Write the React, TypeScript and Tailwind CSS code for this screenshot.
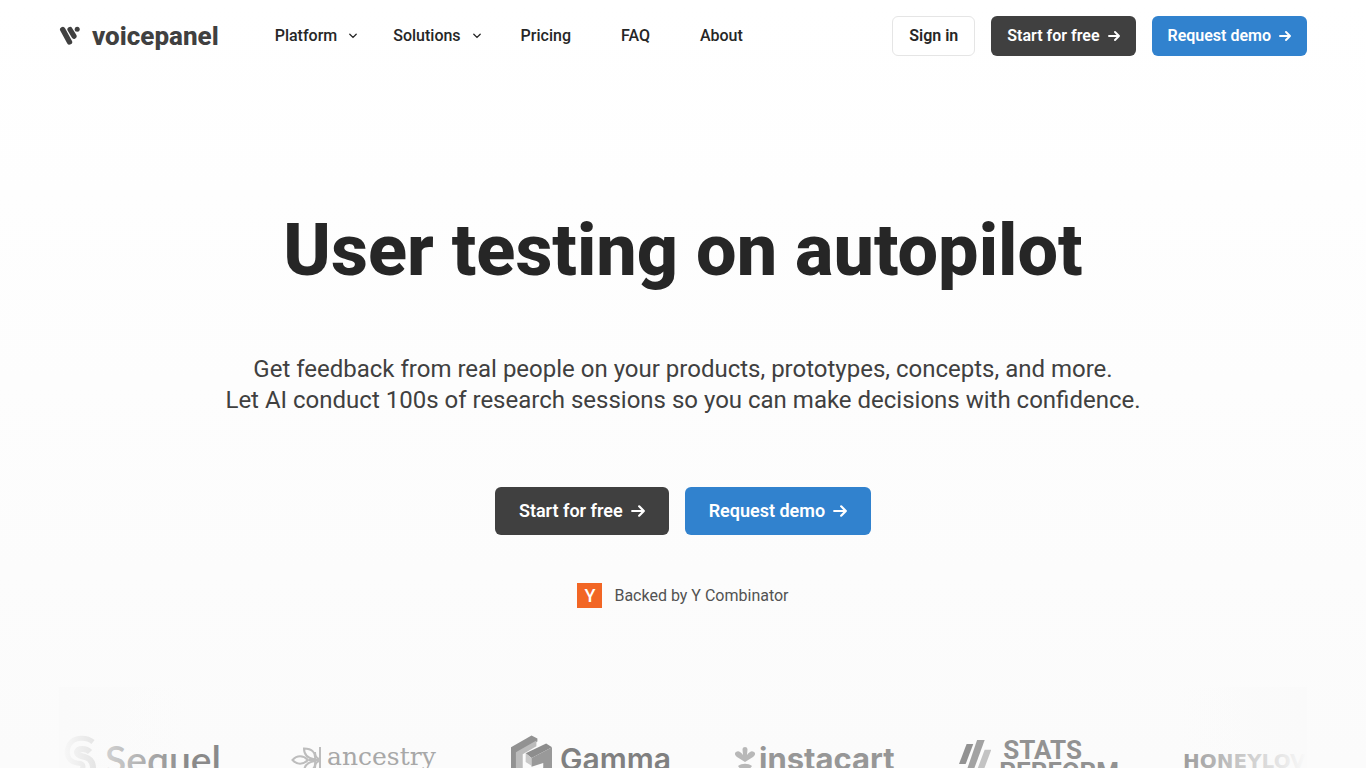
import { clsx } from 'clsx';
import type { ReactNode } from 'react';

const NAV_LINKS = ['Pricing', 'FAQ', 'About'];

function LogoMark() {
  return (
    <svg width="21" height="20" viewBox="0 0 21 20" fill="none" stroke="currentColor" strokeLinecap="round">
      <path d="M3.700 3.500l6.800 12.500" strokeWidth="5.400" />
      <path d="M11 3.500l4 6.700" strokeWidth="5.200" />
      <circle cx="18.200" cy="3.300" r="2.500" fill="currentColor" stroke="none" />
    </svg>
  );
}

function Chevron() {
  return (
    <svg width="8" height="6" viewBox="0 0 8 6" fill="none" stroke="currentColor" strokeWidth="1.300" strokeLinecap="round">
      <path d="M.8 1.200L4 4.400l3.200-3.200" />
    </svg>
  );
}

function Arrow({ large }: { large?: boolean }) {
  return (
    <svg
      className={large ? 'size-[14px]' : 'size-3'}
      viewBox="0 0 12 12"
      fill="none"
      stroke="currentColor"
      strokeWidth="1.900"
      strokeLinecap="round"
      strokeLinejoin="round"
    >
      <path d="M1 6h9.700M7 2l4 4-4 4" />
    </svg>
  );
}

interface ActionProps {
  children: ReactNode;
  primary?: boolean;
  large?: boolean;
}

function Action({ children, primary, large }: ActionProps) {
  return (
    <a
      href="#"
      className={clsx(
        'flex items-center gap-2 rounded-md font-semibold text-white',
        large ? 'h-12 px-6 text-lg' : 'h-10 px-4 text-base',
        primary ? 'bg-[#3182ce]' : 'bg-[#404040]',
      )}
    >
      {children}
      <Arrow large={large} />
    </a>
  );
}

function Header() {
  return (
    <header className="mx-auto flex h-[72px] w-full max-w-[1248px] items-center justify-between">
      <div className="flex items-center">
        <a href="#" className="flex items-center gap-3 text-[#404040]">
          <LogoMark />
          <span className="text-[26px] leading-8 font-extrabold">voicepanel</span>
        </a>
        <nav className="ml-14 flex items-center font-medium text-[#262626]">
          <button className="mr-9 flex items-center gap-3">
            Platform <Chevron />
          </button>
          <button className="mr-10 flex items-center gap-3">
            Solutions <Chevron />
          </button>
          <div className="flex gap-[50px]">
            {NAV_LINKS.map((label) => (
              <a key={label} href="#">
                {label}
              </a>
            ))}
          </div>
        </nav>
      </div>
      <div className="flex items-center gap-4">
        <a
          href="#"
          className="flex h-10 items-center rounded-md border border-[#e5e5e5] bg-white px-4 font-semibold text-[#262626]"
        >
          Sign in
        </a>
        <Action>Start for free</Action>
        <Action primary>Request demo</Action>
      </div>
    </header>
  );
}

function Hero() {
  return (
    <section className="flex flex-col items-center pt-[136px] text-center">
      <h1 className="text-7xl leading-[86px] font-extrabold text-[#262626]">User testing on autopilot</h1>
      <p className="mt-[60px] text-2xl leading-[31px] text-[#404040]">
        Get feedback from real people on your products, prototypes, concepts, and more.
        <br />
        Let AI conduct 100s of research sessions so you can make decisions with confidence.
      </p>
      <div className="mt-[71px] flex gap-4">
        <Action large>Start for free</Action>
        <Action large primary>
          Request demo
        </Action>
      </div>
      <div className="mt-12 flex items-center gap-3 text-[#525252]">
        <span className="flex size-[25px] items-center justify-center bg-[#f26625] text-lg font-medium text-white">Y</span>
        Backed by Y Combinator
      </div>
    </section>
  );
}

function SequelLogo() {
  return (
    <div className="flex w-40 shrink-0 items-start gap-2 text-[#8a8a8a]">
      <svg width="34" height="50" viewBox="0 0 34 50" fill="none" stroke="#b0b0b0">
        <path d="M30 7C24 2 11 1 6 10c-4 8-1 17 8 18 6 0 7 3 5 6" strokeWidth="5" />
        <path d="M27 17c-4-4-12-4-13 0 0 3 4 4 8 5 10 3 10 15 3 20-7 5-17 4-22 0" strokeWidth="6" />
      </svg>
      <span className="font-[Lato] text-[39px] leading-12 font-semibold">Sequel</span>
    </div>
  );
}

function AncestryLogo() {
  return (
    <div className="flex w-40 shrink-0 items-start gap-1 pt-2 pl-1 text-[#a8a8a8]">
      <svg className="mt-1" width="32" height="28" viewBox="0 0 32 28" fill="none" stroke="#bdbdbd" strokeWidth="2">
        <path d="M29 0v26M29 13H18M1.500 13C6 8 12 8 17 13c-5 5-11 5-15.500 0z" />
        <path d="M13 1.500c8 0 12 4 11 11-7-1-11-5-11-11zM13 25c8 0 12-4 11-11-7 1-11 5-11 11zM28 12c-3-1-4-4-4-7M28 14c-3 1-4 4-4 7" />
      </svg>
      <span className="font-['DejaVu_Serif'] text-[25px] leading-7">ancestry</span>
    </div>
  );
}

function GammaLogo() {
  return (
    <div className="flex w-40 shrink-0 items-start gap-2 text-[#808080]">
      <svg width="42" height="50" viewBox="0 0 42 50">
        <path d="M0 12L21 0l6 3v3L6 18v24l-6-4z" fill="#929292" />
        <path d="M5 17L26 5v6L12 19v22l-7-3z" fill="#bcbcbc" />
        <path d="M15 18l21-10 6 4-21 11z" fill="#8d8d8d" />
        <path d="M15 18l6 5v8l-6-4z" fill="#c9c9c9" />
        <path d="M21 23l21-11v24L21 49l-8-5 20-11v-5l-12 4z" fill="#999" />
      </svg>
      <span className="font-[Inter] text-[30px] leading-12 font-semibold">Gamma</span>
    </div>
  );
}

function InstacartLogo() {
  return (
    <div className="flex w-40 shrink-0 items-start gap-1 text-[#979797]">
      <svg className="mt-3" width="20" height="28" viewBox="0 0 20 28" fill="#b8b8b8">
        <path d="M7.500 2.500c0-3.300 5-3.300 5 0L12 8c3-4 5-4.500 7-3s1 3.500-1 5l-8 5-8-5C0 8.500-1 6.500 1 5s4-1 7 3z" />
        <path d="M3 19c4-3 10-3 14 0l-7 9z" />
      </svg>
      <span className="font-[Inter] text-[31px] leading-12 font-bold">instacart</span>
    </div>
  );
}

function StatsPerformLogo() {
  return (
    <div className="flex w-40 shrink-0 items-start gap-2 pt-1 text-[#929292]">
      <svg width="34" height="46" viewBox="0 0 34 46">
        <path d="M8 4h7L7 25H0z" fill="#929292" />
        <path d="M19 0h8L13 38H6z" fill="#a2a2a2" />
        <path d="M27 10h7L22 42h-7z" fill="#c3c3c3" />
      </svg>
      <span className="text-[26px] leading-[22px] font-bold">
        <span className="block pl-1">STATS</span>
        PERFORM
      </span>
    </div>
  );
}

function CustomerLogos() {
  return (
    <section className="relative mx-auto mt-[79px] w-full max-w-[1248px] overflow-hidden">
      <div className="flex gap-16 py-12 pl-1">
        <SequelLogo />
        <AncestryLogo />
        <GammaLogo />
        <InstacartLogo />
        <StatsPerformLogo />
        <div className="w-40 shrink-0 pt-3 font-['DejaVu_Sans'] text-xl leading-7 font-bold text-[#999]">HONEYLOVE</div>
      </div>
      <div className="absolute inset-y-0 left-0 w-32 bg-linear-to-r from-[#fafafa] to-transparent" />
      <div className="absolute inset-y-0 right-0 w-32 bg-linear-to-l from-[#fafafa] to-transparent" />
    </section>
  );
}

export default function App() {
  return (
    <div className="h-screen overflow-hidden bg-linear-to-b from-white to-[#fbfbfb] font-[Roboto,sans-serif]">
      <Header />
      <main>
        <Hero />
        <CustomerLogos />
      </main>
    </div>
  );
}
